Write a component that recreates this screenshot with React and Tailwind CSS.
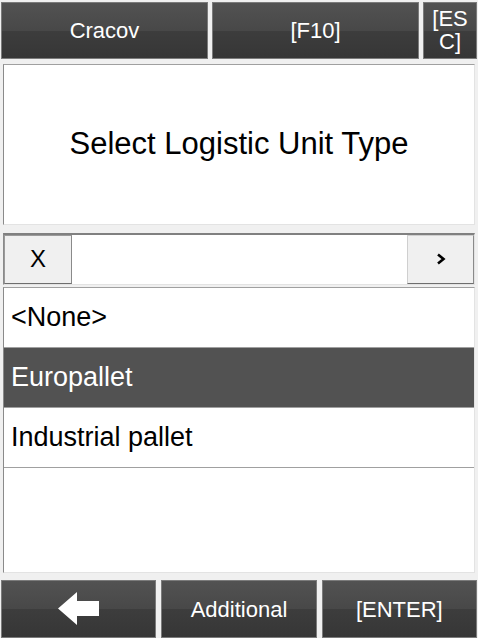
import React from 'react'

const btn =
  'flex items-center justify-center border border-[#7b7b7b] text-white text-[22px] bg-[linear-gradient(to_bottom,#525252,#484848_50%,#3d3d3d_50%,#363636)]'

function BackArrow() {
  return (
    <svg width="42" height="34" viewBox="0 0 42 34">
      <polygon points="0,16.5 19,0 19,9 41,9 41,24 19,24 19,33" fill="#fff" />
    </svg>
  )
}

const items = ['<None>', 'Europallet', 'Industrial pallet']

export default function App() {
  return (
    <div
      className="w-[478px] h-[638px] bg-[#f0f0f0] flex flex-col overflow-hidden"
      style={{ fontFamily: '"Liberation Sans", Arial, sans-serif' }}
    >
      <div className="flex gap-[4px] mx-[1px] mt-[2px] h-[57px]">
        <div className={btn + ' flex-1'}>Cracov</div>
        <div className={btn + ' flex-1'}>[F10]</div>
        <div className={btn + ' w-[54px] break-all text-center leading-[23px] px-[5px]'}>[ESC]</div>
      </div>

      <div className="mx-[3px] mt-[5px] h-[162px] bg-white border border-l-[#8a8a8a] border-t-[#a0a0a0] border-r-[#e3e3e3] border-b-[#e3e3e3] flex items-center justify-center">
        <span className="text-[31px] text-black">Select Logistic Unit Type</span>
      </div>

      <div className="mx-[3px] mt-[8px] h-[52px] bg-white flex border-t-2 border-l border-t-[#808080] border-l-[#8a8a8a] border-b border-r border-b-[#e3e3e3] border-r-[#e3e3e3]">
        <div className="w-[68px] bg-[#f0f0f0] border border-[#9a9a9a] border-r-[#8a8a8a] border-b-[#6e6e6e] flex items-center justify-center text-[24px] text-black">
          X
        </div>
        <div className="flex-1" />
        <div className="w-[67px] bg-[#f0f0f0] border border-[#cfcfcf] border-r-[#8a8a8a] border-b-[#6e6e6e] flex items-center justify-center">
          <svg width="10" height="12" viewBox="0 0 10 12">
            <polyline points="2,1.5 7.5,6 2,10.5" fill="none" stroke="#000" strokeWidth="2.6" />
          </svg>
        </div>
      </div>

      <div className="mx-[3px] mt-[2px] h-[288px] bg-white flex flex-col border-l border-t border-l-[#8a8a8a] border-t-[#a0a0a0] border-r border-b border-r-[#e3e3e3] border-b-[#e3e3e3]">
        {items.map((t, i) => (
          <div
            key={t}
            className={
              'h-[60px] flex items-center pl-[7px] text-[27px] border-b border-[#a0a0a0] ' +
              (i === 1 ? 'bg-[#525252] text-white' : 'text-black')
            }
          >
            {t}
          </div>
        ))}
      </div>

      <div className="flex gap-[5px] mx-[1px] mt-[7px] h-[58px]">
        <div className={btn + ' flex-1'}>
          <BackArrow />
        </div>
        <div className={btn + ' flex-1'}>Additional</div>
        <div className={btn + ' flex-1'}>[ENTER]</div>
      </div>
    </div>
  )
}
